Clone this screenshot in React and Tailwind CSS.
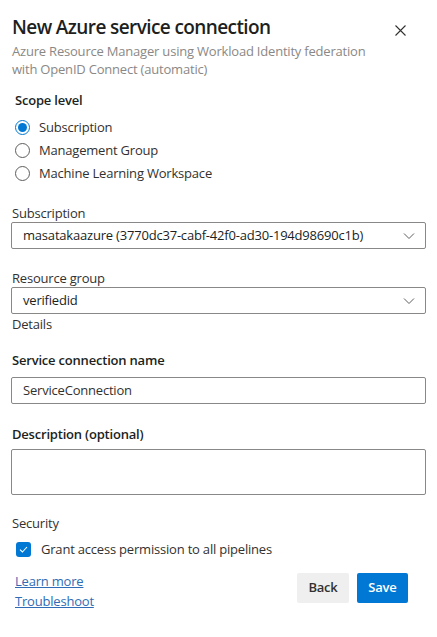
import React from "react";

function Chevron() {
  return (
    <svg width="12" height="8" viewBox="0 0 12 8" fill="none">
      <path d="M1 1.5 L6 6.5 L11 1.5" stroke="#605e5c" strokeWidth="1" />
    </svg>
  );
}

function Radio({ checked, label }) {
  return (
    <div className="flex h-[23px] items-center">
      {checked ? (
        <span className="flex h-[15px] w-[15px] items-center justify-center rounded-full border border-[#0078d4] bg-white">
          <span className="h-[9px] w-[9px] rounded-full bg-[#0078d4]" />
        </span>
      ) : (
        <span className="h-[15px] w-[15px] rounded-full border border-[#605e5c] bg-white" />
      )}
      <span className="ml-[9px] text-[13px] tracking-[-0.2px] text-[#323130]">{label}</span>
    </div>
  );
}

export default function App() {
  return (
    <div
      className="w-[437px] h-[637px] bg-white text-[#323130] px-[11px] pt-[12px] tracking-[-0.2px]"
      style={{ fontFamily: '"Open Sans", "Noto Sans", sans-serif' }}
    >
      <div className="flex items-start justify-between">
        <div className="pl-[1px]">
          <div className="text-[19px] font-semibold leading-[30px] tracking-[-0.6px] text-[#201f1e]">
            New Azure service connection
          </div>
          <div className="text-[13px] leading-[18px] text-[#8a8886]">
            Azure Resource Manager using Workload Identity federation
            <br />
            with OpenID Connect (automatic)
          </div>
        </div>
        <button className="mr-[20px] mt-[12px] flex h-[12px] w-[12px] items-center justify-center">
          <svg width="11" height="11" viewBox="0 0 11 11">
            <path d="M0.5 0.5 L10.5 10.5 M10.5 0.5 L0.5 10.5" stroke="#323130" strokeWidth="1.1" />
          </svg>
        </button>
      </div>

      <div className="mt-[11px] pl-[4px] text-[13px] font-semibold leading-[22px] text-[#201f1e]">
        Scope level
      </div>
      <div className="mt-[5px] pl-[4px]">
        <Radio checked label="Subscription" />
        <Radio label="Management Group" />
        <Radio label="Machine Learning Workspace" />
      </div>

      <div className="mt-[19px] pl-[1px] text-[13px] leading-[18px] text-[#323130]">Subscription</div>
      <div className="flex h-[27px] items-center justify-between rounded-[2px] border border-[#8a8886] pl-[11px] pr-[10px]">
        <span className="text-[13px] text-[#201f1e]">masatakaazure (3770dc37-cabf-42f0-ad30-194d98690c1b)</span>
        <Chevron />
      </div>

      <div className="mt-[20px] pl-[1px] text-[13px] leading-[18px] text-[#323130]">Resource group</div>
      <div className="flex h-[27px] items-center justify-between rounded-[2px] border border-[#8a8886] pl-[11px] pr-[10px]">
        <span className="text-[13px] text-[#201f1e]">verifiedid</span>
        <Chevron />
      </div>
      <div className="pl-[1px] text-[13px] leading-[20px] text-[#323130]">Details</div>

      <div className="mt-[16px] pl-[1px] text-[13px] font-semibold leading-[20px] text-[#201f1e]">
        Service connection name
      </div>
      <div className="mt-[7px] flex h-[27px] items-center rounded-[2px] border border-[#8a8886] pl-[11px]">
        <span className="text-[13px] text-[#323130]">ServiceConnection</span>
      </div>

      <div className="mt-[20px] pl-[1px] text-[13px] font-semibold leading-[20px] text-[#201f1e]">
        Description (optional)
      </div>
      <div className="mt-[5px] h-[46px] rounded-[2px] border border-[#8a8886]" />

      <div className="mt-[18px] pl-[1px] text-[13px] leading-[20px] text-[#323130]">Security</div>
      <div className="mt-[7px] flex items-center pl-[5px]">
        <span className="flex h-[15px] w-[15px] items-center justify-center rounded-[3px] bg-[#0078d4]">
          <svg width="9" height="7" viewBox="0 0 9 7" fill="none">
            <path d="M1 3.6 L3.4 6 L8 1" stroke="white" strokeWidth="1.1" />
          </svg>
        </span>
        <span className="ml-[10px] text-[13px] text-[#323130]">Grant access permission to all pipelines</span>
      </div>

      <div className="mt-[10px] flex items-start justify-between">
        <div className="flex flex-col pl-[4px] pt-[1px]">
          <a className="text-[13px] leading-[20px] text-[#2f6cb5] underline">Learn more</a>
          <a className="text-[13px] leading-[20px] text-[#2f6cb5] underline">Troubleshoot</a>
        </div>
        <div className="mr-[18px] mt-[3px] flex gap-[8px]">
          <button className="h-[30px] w-[52px] rounded-[2px] bg-[#efefef] text-[13px] font-semibold text-[#323130]">
            Back
          </button>
          <button className="h-[30px] w-[51px] rounded-[2px] bg-[#0078d4] text-[13px] font-semibold text-white">
            Save
          </button>
        </div>
      </div>
    </div>
  );
}
